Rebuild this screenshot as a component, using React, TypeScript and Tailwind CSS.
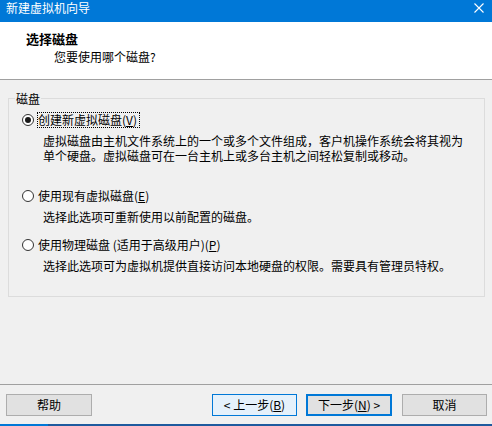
import React from "react";

function Radio({ checked }: { checked?: boolean }) {
  return (
    <span className="w-[12px] h-[12px] rounded-full border border-[#333333] bg-white flex items-center justify-center shrink-0">
      {checked && <span className="w-[6px] h-[6px] rounded-full bg-[#1a1a1a]" />}
    </span>
  );
}

function Btn({
  children,
  className,
}: {
  children: React.ReactNode;
  className: string;
}) {
  return (
    <div className={"h-[22px] flex items-center justify-center leading-[14px] " + className}>
      {children}
    </div>
  );
}

export default function App() {
  return (
    <div className="w-[492px] h-[426px] flex flex-col bg-[#f0f0f0] text-black text-[12px] font-['Noto_Sans_CJK_SC','Noto_Sans',sans-serif] overflow-hidden">
      {/* title bar */}
      <div className="h-[22px] shrink-0 bg-[#0078d7] flex items-start justify-between pl-[6px] pr-[8px]">
        <span className="text-white leading-[16px]">新建虚拟机向导</span>
        <svg className="mt-[3px]" width="10" height="10" viewBox="0 0 10 10">
          <path d="M0.5 0.5 L9.5 9.5 M9.5 0.5 L0.5 9.5" stroke="white" strokeWidth="1.1" />
        </svg>
      </div>

      {/* header */}
      <div className="h-[58px] shrink-0 bg-white border-b border-[#a0a0a0] pt-[8px]">
        <div className="pl-[26px] leading-[17px] text-[13px] font-bold">选择磁盘</div>
        <div className="pl-[54px] leading-[20px]">您要使用哪个磁盘?</div>
      </div>

      {/* body */}
      <div className="flex-1 pt-[18px] pl-[8px] pr-[7px]">
        <div className="relative h-[199px] border border-[#dcdcdc] pt-[13px]">
          <span className="absolute left-[6px] top-[-7px] px-[1px] bg-[#f0f0f0] leading-[14px]">磁盘</span>

          <div className="flex items-center h-[16px] pl-[13px]">
            <Radio checked />
            <span className="ml-[3px] border border-dotted border-black leading-[14px] pr-[2px]">
              创建新虚拟磁盘(<span className="underline">V</span>)
            </span>
          </div>
          <div className="pl-[34px] mt-[5px] leading-[15px]">
            <div>虚拟磁盘由主机文件系统上的一个或多个文件组成，客户机操作系统会将其视为</div>
            <div>单个硬盘。虚拟磁盘可在一台主机上或多台主机之间轻松复制或移动。</div>
          </div>

          <div className="flex items-center h-[16px] pl-[13px] mt-[25px]">
            <Radio />
            <span className="ml-[3px] border border-transparent leading-[14px]">
              使用现有虚拟磁盘(<span className="underline">E</span>)
            </span>
          </div>
          <div className="pl-[34px] mt-[6px] leading-[13px]">选择此选项可重新使用以前配置的磁盘。</div>

          <div className="flex items-center h-[16px] pl-[13px] mt-[14px]">
            <Radio />
            <span className="ml-[3px] border border-transparent leading-[14px]">
              使用物理磁盘 (适用于高级用户)(<span className="underline">P</span>)
            </span>
          </div>
          <div className="pl-[34px] mt-[6px] leading-[13px]">
            选择此选项可为虚拟机提供直接访问本地硬盘的权限。需要具有管理员特权。
          </div>
        </div>
      </div>

      {/* footer */}
      <div className="shrink-0 border-t border-[#a0a0a0]">
        <div className="flex items-center pt-[9px] pb-[8px] pl-[6px] pr-[5px]">
          <Btn className="w-[86px] bg-[#e1e1e1] border border-[#adadad]">帮助</Btn>
          <div className="ml-auto flex items-center">
            <Btn className="w-[85px] bg-[#e5f1fb] border border-[#0078d7]">
              &lt; 上一步(<span className="underline">B</span>)
            </Btn>
            <Btn className="w-[86px] ml-[9px] bg-[#e1e1e1] border-2 border-[#0078d7]">
              下一步(<span className="underline">N</span>) &gt;
            </Btn>
            <Btn className="w-[85px] ml-[10px] bg-[#e1e1e1] border border-[#adadad]">取消</Btn>
          </div>
        </div>
        <div className="flex h-[2px]">
          <div className="w-[48px] bg-[#0078d7]" />
          <div className="flex-1 bg-[#1e5a9e]" />
        </div>
      </div>
    </div>
  );
}
